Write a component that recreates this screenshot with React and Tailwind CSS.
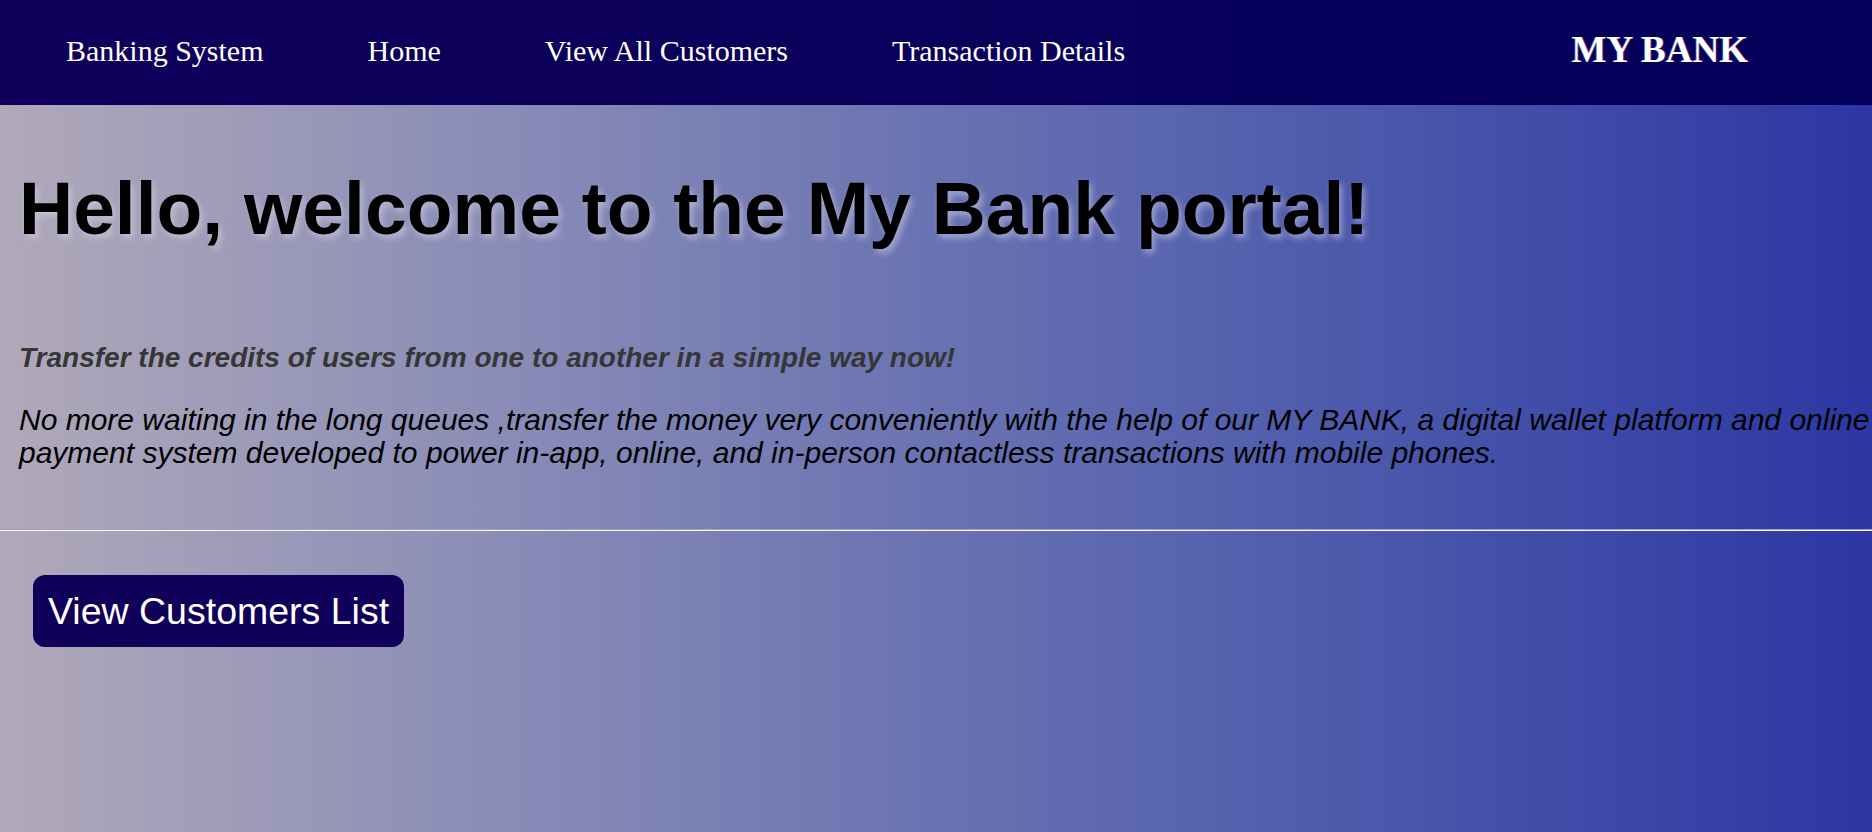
// Landing page for the bank portal
function NavBar() {
    const links = ["Banking System", "Home", "View All Customers", "Transaction Details"];
    return (
        <nav className="h-[105px] pb-[5px] flex items-center justify-between bg-linear-to-r from-[#10005b] to-[#03005a] pl-[66px] pr-[124px]">
            <ul className="flex items-center gap-[104px]">
                {links.map((link) => (
                    <li key={link} className="text-white text-[30px] font-['Liberation_Serif',serif] whitespace-nowrap">
                        {link}
                    </li>
                ))}
            </ul>
            <div className="text-white text-[37px] font-bold font-['Liberation_Serif',serif] whitespace-nowrap [text-shadow:1px_0_0_rgba(255,80,120,0.35),-1px_0_0_rgba(80,160,255,0.35)]">
                MY BANK
            </div>
        </nav>
    );
}

export default function App() {
    return (
        <div className="min-h-screen w-full overflow-hidden bg-linear-to-r from-[#b1a9ba] to-[#2d36a3] font-['Liberation_Sans',Arial,sans-serif]">
            <NavBar />

            {/* Welcome section */}
            <h1 className="mt-[66px] pl-[19px] text-[75px] leading-none font-bold text-black whitespace-nowrap [text-shadow:3px_4px_6px_rgba(220,220,235,0.5)]">
                Hello, welcome to the My Bank portal!
            </h1>

            <p className="mt-[98px] pl-[19px] text-[28px] leading-none font-bold italic text-[#363636] whitespace-nowrap">
                Transfer the credits of users from one to another in a simple way now!
            </p>

            <p className="mt-[31px] pl-[19px] text-[30px] leading-[33px] italic text-black whitespace-nowrap">
                No more waiting in the long queues ,transfer the money very conveniently with the help of our MY BANK, a digital wallet platform and online
                <br />
                payment system developed to power in-app, online, and in-person contactless transactions with mobile phones.
            </p>

            <hr className="mt-[60px] border-0 border-t border-b border-t-[#a4a4b8] border-b-[#f4f4fa]" />

            <button className="mt-[44px] ml-[33px] px-[15px] py-[15px] rounded-xl bg-[#10005a] text-white text-[37.5px] leading-[42px] whitespace-nowrap">
                View Customers List
            </button>
        </div>
    );
}
